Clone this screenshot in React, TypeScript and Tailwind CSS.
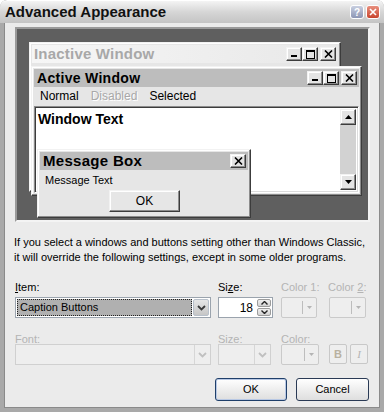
import React from "react";

const raised =
  "border border-t-[#f2f2f2] border-l-[#f2f2f2] border-r-[#3c3c3c] border-b-[#3c3c3c] shadow-[inset_-1px_-1px_0_#8c8c8c,inset_1px_1px_0_#ffffff]";
const sunken =
  "border border-t-[#8c8c8c] border-l-[#8c8c8c] border-r-[#ffffff] border-b-[#ffffff] shadow-[inset_1px_1px_0_#3c3c3c,inset_-1px_-1px_0_#dcdcdc]";

function CapBtn({ kind }: { kind: "min" | "max" | "close" }) {
  return (
    <div className={`w-[16px] h-[14px] bg-[#e4e4e4] ${raised} flex items-center justify-center`}>
      {kind === "min" && (
        <svg width="9" height="8" viewBox="0 0 9 8">
          <rect x="1" y="5" width="6" height="2" fill="#000" />
        </svg>
      )}
      {kind === "max" && (
        <svg width="9" height="9" viewBox="0 0 9 9">
          <rect x="0.5" y="0.5" width="8" height="8" fill="none" stroke="#000" />
          <rect x="0" y="0" width="9" height="2" fill="#000" />
        </svg>
      )}
      {kind === "close" && (
        <svg width="9" height="8" viewBox="0 0 9 8">
          <path d="M1 0.5 L8 7.5 M8 0.5 L1 7.5" stroke="#000" strokeWidth="1.6" />
        </svg>
      )}
    </div>
  );
}

function Arrow({ up }: { up?: boolean }) {
  return (
    <div className={`w-[16px] h-[16px] bg-[#e4e4e4] ${raised} flex items-center justify-center`}>
      <svg width="7" height="4" viewBox="0 0 7 4">
        <path d={up ? "M3.5 0 L7 4 L0 4 Z" : "M0 0 L7 0 L3.5 4 Z"} fill="#000" />
      </svg>
    </div>
  );
}

function Chevron({ color }: { color: string }) {
  return (
    <svg width="9" height="6" viewBox="0 0 9 6">
      <path d="M1 1 L4.5 4.5 L8 1" stroke={color} strokeWidth="1.8" fill="none" />
    </svg>
  );
}

function ColorBox({ w }: { w: string }) {
  return (
    <div className={`${w} h-[21px] rounded-[2px] border border-[#cacaca] bg-[#eeeeee] flex items-center justify-end pr-[4px] gap-[4px]`}>
      <div className="w-px h-[13px] bg-[#bdbdbd]" />
      <svg width="5" height="3" viewBox="0 0 5 3">
        <path d="M0 0 L5 0 L2.5 3 Z" fill="#b4b4b4" />
      </svg>
    </div>
  );
}

function Preview() {
  return (
    <div className="relative mt-[4px] ml-[10px] w-[355px] h-[195px] bg-[#5f5f5f] border-2 border-t-[#9a9a9a] border-l-[#9a9a9a] border-r-[#f4f4f4] border-b-[#f4f4f4] overflow-hidden">
      {/* inactive window */}
      <div className={`absolute left-[12px] top-[13px] w-[312px] h-[150px] bg-[#e6e6e6] ${raised} p-[2px]`}>
        <div className="h-[18px] bg-gradient-to-r from-[#f6f6f6] to-[#e8e8e8] flex items-center justify-between pl-[2px] pr-[2px]">
          <span className="text-[15px] font-bold text-[#a8a8a8] tracking-[0.2px]">Inactive Window</span>
          <div className="flex items-center">
            <CapBtn kind="min" />
            <CapBtn kind="max" />
            <div className="w-[2px]" />
            <CapBtn kind="close" />
          </div>
        </div>
      </div>

      {/* active window */}
      <div className={`absolute left-[14px] top-[37px] w-[331px] h-[130px] bg-[#e6e6e6] ${raised} p-[2px] flex flex-col`}>
        <div className="h-[18px] bg-[#bdbdbd] flex items-center justify-between pl-[3px] pr-[2px]">
          <span className="text-[14px] font-bold text-black tracking-[0.3px]">Active Window</span>
          <div className="flex items-center">
            <CapBtn kind="min" />
            <CapBtn kind="max" />
            <div className="w-[2px]" />
            <CapBtn kind="close" />
          </div>
        </div>
        <div className="h-[18px] flex items-center text-[12px] pl-[6px] gap-[12px]">
          <span className="text-black">Normal</span>
          <span className="text-[#a8a8a8] [text-shadow:1px_1px_0_#ffffff]">Disabled</span>
          <span className="text-black">Selected</span>
        </div>
        <div className={`flex-1 mt-[1px] bg-white ${sunken} p-[2px] flex`}>
          <div className="flex-1 pl-[1px] pt-[1px] text-[14px] font-bold text-black leading-[18px]">Window Text</div>
          <div className="w-[16px] flex flex-col bg-[#d2d2d2]">
            <Arrow up />
            <div className="flex-1" />
            <Arrow />
          </div>
        </div>
      </div>

      {/* message box */}
      <div className={`absolute left-[20px] top-[120px] w-[214px] h-[69px] bg-[#e6e6e6] ${raised} p-[2px] flex flex-col`}>
        <div className="h-[18px] bg-[#bdbdbd] flex items-center justify-between pl-[3px] pr-[2px]">
          <span className="text-[15px] font-bold text-black tracking-[0.3px]">Message Box</span>
          <CapBtn kind="close" />
        </div>
        <div className="text-[11px] text-black pl-[5px] pt-[3px] leading-[14px]">Message Text</div>
        <div className="flex justify-center pl-[1px] mt-[3px]">
          <div className={`w-[71px] h-[22px] bg-[#e6e6e6] ${raised} flex items-center justify-center text-[12px] text-black`}>
            OK
          </div>
        </div>
      </div>
    </div>
  );
}

export default function App() {
  return (
    <div className="w-[384px] h-[412px] bg-[#a9a9a9] rounded-t-[7px] flex flex-col font-['Liberation_Sans',Arial,sans-serif] text-black overflow-hidden">
      {/* title bar */}
      <div className="h-[23px] shrink-0 rounded-t-[7px] bg-gradient-to-b from-[#f4f4f4] via-[#d6d6d6] to-[#c4c4c4] border-t border-[#ffffff] flex items-center justify-between pl-[5px] pr-[4px]">
        <span className="text-[15px] font-bold text-[#111]">Advanced Appearance</span>
        <div className="flex items-center gap-[2px]">
          <div className="w-[14px] h-[14px] rounded-[3px] border border-white bg-gradient-to-b from-[#c9cfe0] to-[#8d96b4] flex items-center justify-center text-[10px] font-bold text-white">
            ?
          </div>
          <div className="w-[14px] h-[14px] rounded-[3px] border border-white bg-gradient-to-b from-[#e88f7e] to-[#c8432c] flex items-center justify-center">
            <svg width="8" height="8" viewBox="0 0 8 8">
              <path d="M1 1 L7 7 M7 1 L1 7" stroke="#fff" strokeWidth="1.6" />
            </svg>
          </div>
        </div>
      </div>

      {/* client */}
      <div className="flex-1 mx-[4px] mb-[4px] bg-[#ebebeb] border-x border-b border-[#8a8a8a] flex flex-col">
        <Preview />

        <p className="mt-[13px] ml-[9px] text-[11px] leading-[15px] text-black">
          If you select a windows and buttons setting other than Windows Classic,
          <br />
          it will override the following settings, except in some older programs.
        </p>

        {/* row 1 labels */}
        <div className="mt-[16px] ml-[10px] flex text-[11px] leading-[13px] h-[13px]">
          <span className="w-[203px]">
            <u>I</u>tem:
          </span>
          <span className="w-[63px]">
            Si<u>z</u>e:
          </span>
          <span className="w-[47px] text-[#b4b4b4]">Color 1:</span>
          <span className="text-[#b4b4b4]">
            Color <u>2</u>:
          </span>
        </div>

        {/* row 1 controls */}
        <div className="mt-[3px] ml-[10px] flex h-[21px]">
          <div className="w-[203px]">
            <div className="w-[196px] h-[21px] border border-[#9aa3ad] bg-white flex items-center p-[1px]">
              <div className="flex-1 h-full bg-[#b0b0b0] border border-dotted border-[#222] flex items-center pl-[2px] text-[11px]">
                Caption Buttons
              </div>
              <div className="w-[16px] h-[17px] ml-[1px] rounded-[2px] border border-[#b8c0ca] bg-gradient-to-b from-[#e6e6e6] to-[#c6c6c6] flex items-center justify-center">
                <Chevron color="#3a3a3a" />
              </div>
            </div>
          </div>
          <div className="w-[63px]">
            <div className="w-[55px] h-[21px] border border-[#9aa3ad] bg-white flex items-center p-[1px]">
              <div className="flex-1 text-right pr-[4px] text-[12px]">18</div>
              <div className="w-[14px] h-full flex flex-col gap-px">
                <div className="flex-1 rounded-[2px] border border-[#9c9c9c] bg-gradient-to-b from-[#f0f0f0] to-[#d2d2d2] flex items-center justify-center">
                  <svg width="7" height="4" viewBox="0 0 7 4">
                    <path d="M0.5 3.5 L3.5 0.5 L6.5 3.5" stroke="#222" strokeWidth="1.4" fill="none" />
                  </svg>
                </div>
                <div className="flex-1 rounded-[2px] border border-[#9c9c9c] bg-gradient-to-b from-[#f0f0f0] to-[#d2d2d2] flex items-center justify-center">
                  <svg width="7" height="4" viewBox="0 0 7 4">
                    <path d="M0.5 0.5 L3.5 3.5 L6.5 0.5" stroke="#222" strokeWidth="1.4" fill="none" />
                  </svg>
                </div>
              </div>
            </div>
          </div>
          <div className="w-[48px]">
            <ColorBox w="w-[36px]" />
          </div>
          <ColorBox w="w-[37px]" />
        </div>

        {/* row 2 labels */}
        <div className="mt-[16px] ml-[10px] flex text-[11px] leading-[11px] h-[11px] text-[#b4b4b4]">
          <span className="w-[203px]">
            <u>F</u>ont:
          </span>
          <span className="w-[63px]">
            Siz<u>e</u>:
          </span>
          <span>
            Colo<u>r</u>:
          </span>
        </div>

        {/* row 2 controls */}
        <div className="mt-[-1px] ml-[10px] flex h-[21px]">
          <div className="w-[203px]">
            <div className="w-[196px] h-[21px] border border-[#d0d0d0] bg-[#eeeeee] flex items-center justify-end">
              <div className="w-[16px] h-[19px] border-l border-[#d6d6d6] flex items-center justify-center">
                <Chevron color="#c0c0c0" />
              </div>
            </div>
          </div>
          <div className="w-[63px]">
            <div className="w-[53px] h-[21px] border border-[#d0d0d0] bg-[#eeeeee] flex items-center justify-end">
              <div className="w-[16px] h-[19px] border-l border-[#d6d6d6] flex items-center justify-center">
                <Chevron color="#c0c0c0" />
              </div>
            </div>
          </div>
          <div className="w-[48px]">
            <ColorBox w="w-[38px]" />
          </div>
          <div className="flex gap-[3px]">
            <div className="w-[18px] h-[20px] rounded-[2px] border border-[#c8c8c8] bg-[#eeeeee] flex items-center justify-center text-[11px] font-bold text-[#b9b1a0]">
              B
            </div>
            <div className="w-[18px] h-[20px] rounded-[2px] border border-[#c8c8c8] bg-[#eeeeee] flex items-center justify-center text-[11px] italic font-['Liberation_Serif',serif] text-[#b4b4b4]">
              I
            </div>
          </div>
        </div>

        {/* buttons */}
        <div className="mt-[13px] flex justify-end gap-[9px] pr-[10px]">
          <div className="w-[72px] h-[23px] rounded-[3px] border border-[#1f3f6a] bg-gradient-to-b from-[#ffffff] to-[#dedede] shadow-[inset_0_0_0_1px_#b8c8e4] flex items-center justify-center text-[11px]">
            OK
          </div>
          <div className="w-[73px] h-[23px] rounded-[3px] border border-[#2a3a55] bg-gradient-to-b from-[#ffffff] to-[#dedede] flex items-center justify-center text-[11px]">
            Cancel
          </div>
        </div>
      </div>
    </div>
  );
}
